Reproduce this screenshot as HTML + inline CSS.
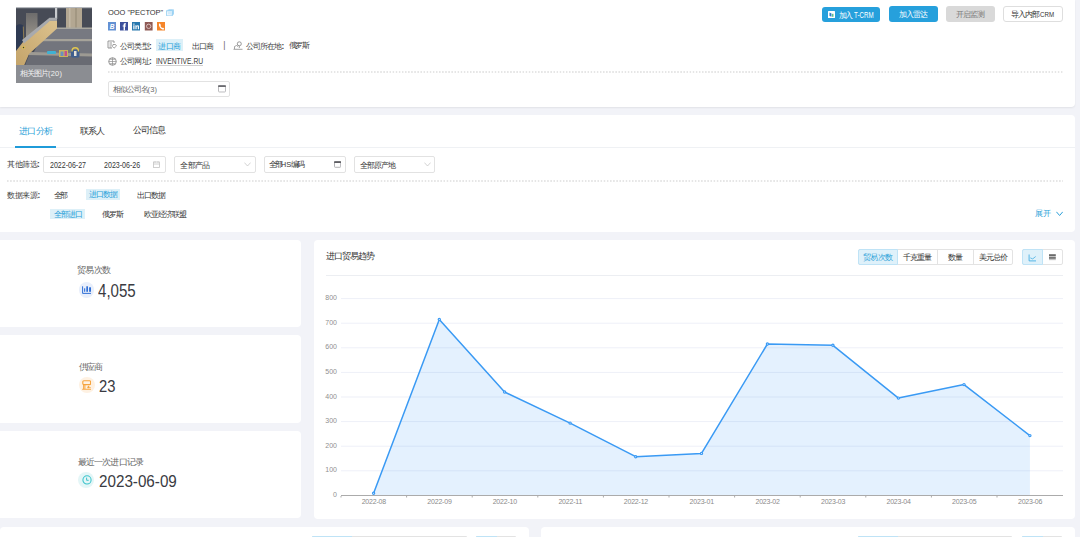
<!DOCTYPE html><html><head><meta charset="utf-8"><style>*{margin:0;padding:0;box-sizing:border-box}
html,body{width:1080px;height:537px;overflow:hidden;background:#f2f3f8;font-family:"Liberation Sans",sans-serif;color:#333;font-size:8px}
.abs{position:absolute}
.card{position:absolute;background:#fff;border-radius:4px}
.t{position:absolute;white-space:nowrap;line-height:1}
.box{position:absolute;border-radius:3px}
.inp{position:absolute;border:1px solid #e2e2e2;border-radius:2px;background:#fff}
</style></head><body>
<div class="abs" style="left:0;top:0;width:1080px;height:537px;">
<div class="card" style="left:0;top:0;width:1075px;height:107px;border-radius:0 0 4px 0;box-shadow:0 1px 2px rgba(0,0,0,0.07)"></div>
<div class="abs" style="left:16.2px;top:6.5px;width:76.3px;height:76px;overflow:hidden"><svg width="77" height="76" viewBox="0 0 77 76" style="display:block">
<defs><linearGradient id="pan" x1="0" y1="0" x2="0" y2="1"><stop offset="0" stop-color="#6d6c6c"/><stop offset="1" stop-color="#98938a"/></linearGradient>
<linearGradient id="wood" x1="0" y1="1" x2="1" y2="0"><stop offset="0" stop-color="#c4a46a"/><stop offset="1" stop-color="#dcc28e"/></linearGradient></defs>
<rect width="77" height="76" fill="#474b56"/>
<rect x="0" y="0" width="77" height="1.2" fill="#b5b8bd"/>
<rect x="10" y="6" width="11.5" height="24" fill="url(#pan)"/>
<rect x="39" y="1" width="2.2" height="11" fill="#c9cbce"/>
<rect x="50" y="1" width="16" height="20.5" fill="#b3a792"/>
<rect x="53" y="1" width="1.5" height="20.5" fill="#c4b9a5"/>
<rect x="59" y="1" width="2" height="20.5" fill="#a29782"/>
<polygon points="33,21 77,21 77,32 26,32" fill="#777981"/>
<rect x="33" y="20.5" width="44" height="1.5" fill="#a9a79f"/>
<polygon points="24,32.5 77,32.5 77,47 17,47" fill="#73757d"/>
<rect x="23" y="32" width="54" height="2.2" fill="#a6a39a"/>
<polygon points="14,46 77,47 77,58.5 9,58.5" fill="#696b73"/>
<polygon points="14,45 77,46.5 77,49.5 12,48" fill="#9d9a93"/>
<path d="M0 19C2 16.5 6.5 16.5 7.5 19.5L8.5 50L0 52Z" fill="#2e3a53"/>
<path d="M7.3 19.5L8.3 50" stroke="#b49754" stroke-width="0.7"/>
<polygon points="0,44 7,35 33.5,13.5 41,13.5 41,21.5 13,47 8,58.5 0,58.5" fill="url(#wood)"/>
<polygon points="6,33 33.5,10.8 41,10.8 41,13.8 34,13.8 8,36.5" fill="#a8aaae"/>
<circle cx="7.5" cy="40.5" r="1.8" fill="#d9bb55"/><circle cx="7.5" cy="40.5" r="0.7" fill="#3a3a3a"/>
<rect x="31" y="44" width="9" height="3" rx="1" fill="#3fb1d3"/>
<rect x="43" y="43" width="9" height="7" fill="#c9b55a"/>
<rect x="44.5" y="44.5" width="3" height="4.5" fill="#6a8fc0"/>
<rect x="48.5" y="44" width="2.5" height="5" fill="#c4508a"/>
<rect x="55" y="43" width="8.5" height="7.5" rx="1.5" fill="#3f5f8e"/>
<path d="M56 44.5C56 39.5 62.5 39.5 62.5 44.5" fill="none" stroke="#e3c84e" stroke-width="1.3"/>
<rect x="58" y="44" width="2.5" height="5" fill="#e5e2d8"/>
</svg><div class="abs" style="left:0;top:58px;width:77px;height:18px;background:#8b8d92"></div></div>
<svg class="abs" style="left:166px;top:8.9px" width="8" height="7.2" viewBox="0 0 8 7.2"><rect x="2.2" y="0.2" width="5.8" height="5.6" rx="0.8" fill="#a9d8f5"/><rect x="0.4" y="1.4" width="6.2" height="5.6" rx="0.8" fill="#d3ebfa" stroke="#8ccbf1" stroke-width="0.8"/><path d="M1.4 3V5.8H4.8" fill="none" stroke="#fff" stroke-width="0.6"/></svg>
<svg class="abs" style="left:108px;top:22px" width="58" height="9" viewBox="0 0 58 9">
<rect x="0" y="0" width="8" height="8.5" fill="#6391d3"/><text x="4" y="7" text-anchor="middle" font-family="Liberation Sans" font-weight="bold" font-style="italic" font-size="6.5" fill="#fff">B</text>
<rect x="12" y="0" width="8" height="8.5" fill="#3b4f9b"/><path d="M15.6 8.5V4.6H14.7V3.4H15.6V2.6C15.6 1.6 16.1 1.2 17 1.2H18V2.4H17.4C17.1 2.4 17 2.6 17 2.9V3.4H18L17.9 4.6H17V8.5Z" fill="#fff"/>
<rect x="24" y="0" width="8" height="8.5" fill="#2878ae"/><rect x="25.3" y="3.3" width="1.2" height="4" fill="#fff"/><rect x="25.3" y="1.6" width="1.2" height="1.1" fill="#fff"/><path d="M27.4 3.3H28.5V3.9C28.8 3.4 29.3 3.2 29.8 3.2C30.7 3.2 31 3.8 31 4.7V7.3H29.8V5C29.8 4.5 29.6 4.3 29.3 4.3C28.9 4.3 28.6 4.6 28.6 5.1V7.3H27.4Z" fill="#fff"/>
<rect x="36.8" y="0" width="7.8" height="8.5" fill="#8e5a55"/><circle cx="40.7" cy="4.3" r="2.2" fill="none" stroke="#e8d6d4" stroke-width="0.8"/>
<rect x="49" y="0" width="8" height="8.5" fill="#f5862b"/><path d="M51 1.8C51.4 1.3 52 1.4 52.3 2L52.8 3C53 3.4 52.8 3.7 52.5 3.9C52.9 4.9 53.5 5.6 54.4 6C54.6 5.7 55 5.5 55.3 5.8L56 6.4C56.4 6.8 56.2 7.3 55.8 7.5C53.5 8 50.5 5 51 1.8Z" fill="#fff"/>
</svg>
<svg class="abs" style="left:107px;top:40px" width="10" height="9" viewBox="0 0 10 9"><path d="M1 1H7V3M1 1V8H5M2.5 3H5M2.5 5H5M2.5 7H4.5" fill="none" stroke="#8c8c8c" stroke-width="0.9"/><path d="M6 4.5L8.5 4.5L9.5 6L7 8.2L5.5 6.5Z" fill="none" stroke="#8c8c8c" stroke-width="0.8"/></svg>
<svg class="abs" style="left:107.5px;top:56.5px" width="9" height="9" viewBox="0 0 9 9"><circle cx="4.5" cy="4.5" r="3.8" fill="none" stroke="#8c8c8c" stroke-width="0.9"/><path d="M0.8 4.5H8.2M4.5 0.7V8.3M2 2.3H7M2 6.7H7" fill="none" stroke="#8c8c8c" stroke-width="0.7"/></svg>
<svg class="abs" style="left:233px;top:40.5px" width="10" height="9" viewBox="0 0 10 9"><circle cx="6.3" cy="2.8" r="2" fill="none" stroke="#8c8c8c" stroke-width="0.9"/><path d="M6.3 4.8V7M0.5 8.3H9.5M1.5 8V5.5L3.5 4.5L5 5.5" fill="none" stroke="#8c8c8c" stroke-width="0.8"/></svg>
<div class="abs" style="left:155.5px;top:39px;width:27.5px;height:12px;background:#ddf0f8"></div>
<div class="abs" style="left:156px;top:65px;width:47px;height:1px;background:#d0d0d0"></div>
<div class="abs" style="left:108px;top:71px;width:955px;height:2px;background-image:linear-gradient(90deg,#e6e6e6 60%,transparent 60%);background-size:3.1px 2px"></div>
<div class="inp" style="left:108.4px;top:81.2px;width:121.3px;height:15.6px"></div>
<svg class="abs" style="left:218px;top:85.4px" width="8" height="7.4" viewBox="0 0 8 7.4"><rect x="0.5" y="0.5" width="7" height="6.5" rx="0.8" fill="none" stroke="#b4b4b8" stroke-width="0.9"/><rect x="0.1" y="0.3" width="7.8" height="1.7" rx="0.5" fill="#6b6b70"/></svg>
<div class="box" style="left:821.6px;top:7px;width:58.4px;height:14.7px;background:#26a0dc"></div>
<svg class="abs" style="left:828px;top:11.4px" width="7" height="7" viewBox="0 0 7 7"><rect width="7" height="7" rx="0.5" fill="#fff"/><path d="M1.5 1.5L3.5 2.5V5.8L1.5 5Z" fill="#2a7fc9"/><rect x="4.2" y="2.8" width="1.2" height="3" fill="#39b36b"/></svg>
<div class="box" style="left:888.6px;top:6.3px;width:49px;height:16px;background:#26a0dc"></div>
<div class="box" style="left:946px;top:6.3px;width:49px;height:16px;background:#d9d9d9"></div>
<div class="box" style="left:1003px;top:6.3px;width:59.7px;height:16px;background:#fff;border:1px solid #dedede"></div>
<div class="card" style="left:0;top:115px;width:1075px;height:116.6px;border-radius:0 4px 4px 0"></div>
<div class="abs" style="left:0;top:147px;width:1075px;height:1px;background:#eff1f4"></div>
<div class="abs" style="left:14.5px;top:146px;width:41.3px;height:2px;background:#1f9bd9"></div>
<div class="inp" style="left:43.3px;top:156.3px;width:122.7px;height:16.3px"></div>
<svg class="abs" style="left:152.5px;top:161.4px" width="7" height="7" viewBox="0 0 7 7"><rect x="0.5" y="1" width="6" height="5.5" fill="none" stroke="#c4c4c4" stroke-width="0.8"/><path d="M0.5 3H6.5M2 0.2V1.8M5 0.2V1.8" stroke="#c4c4c4" stroke-width="0.8"/></svg>
<div class="inp" style="left:174px;top:156.3px;width:81.6px;height:16.3px"></div>
<svg class="abs" style="left:243.5px;top:162px" width="7" height="5" viewBox="0 0 7 5"><path d="M0.4 0.6L3.5 4L6.6 0.6" fill="none" stroke="#c8c8c8" stroke-width="0.8"/></svg>
<div class="inp" style="left:264.3px;top:156.3px;width:81.5px;height:16.3px"></div>
<svg class="abs" style="left:333.6px;top:161px" width="7.2" height="6.8" viewBox="0 0 7.2 6.8"><rect x="0.5" y="0.5" width="6.2" height="5.8" rx="0.7" fill="none" stroke="#a8a8ac" stroke-width="0.9"/><rect x="0.1" y="0.3" width="7" height="1.6" rx="0.5" fill="#5f5f64"/></svg>
<div class="inp" style="left:354.3px;top:156.3px;width:81.2px;height:16.3px"></div>
<svg class="abs" style="left:423.5px;top:162px" width="7" height="5" viewBox="0 0 7 5"><path d="M0.4 0.6L3.5 4L6.6 0.6" fill="none" stroke="#c8c8c8" stroke-width="0.8"/></svg>
<div class="abs" style="left:7px;top:180px;width:1056px;height:1.5px;background-image:linear-gradient(90deg,#e6e6e6 60%,transparent 60%);background-size:3.15px 1.5px"></div>
<div class="abs" style="left:85.6px;top:189.2px;width:34.2px;height:10.5px;background:#ddf0f8"></div>
<div class="abs" style="left:50.4px;top:208.6px;width:34.8px;height:10.2px;background:#ddf0f8"></div>
<svg class="abs" style="left:1055.7px;top:211px" width="7.2" height="5.5" viewBox="0 0 7.2 5.5"><path d="M0.4 0.8L3.6 4.5L6.8 0.8" fill="none" stroke="#2a9fd8" stroke-width="1"/></svg>
<div class="card" style="left:0;top:240px;width:301.4px;height:87px;border-radius:0 4px 4px 0"></div>
<div class="card" style="left:0;top:335.3px;width:301.4px;height:87.6px;border-radius:0 4px 4px 0"></div>
<div class="card" style="left:0;top:430.6px;width:301.4px;height:87.4px;border-radius:0 4px 4px 0"></div>
<div class="abs" style="left:78.6px;top:282px;width:15.6px;height:15.6px;border-radius:50%;background:#e9effb"></div>
<svg class="abs" style="left:81.9px;top:285.7px" width="9.3" height="8.2" viewBox="0 0 9.3 8.2"><path d="M0.6 0.3V7.4H9" fill="none" stroke="#2f6fd6" stroke-width="1"/><rect x="2.1" y="2.3" width="1.1" height="3.5" fill="#2f6fd6"/><rect x="4.3" y="0.3" width="1.7" height="5.5" fill="#2f6fd6"/><rect x="7.1" y="1.3" width="1.9" height="4.5" fill="#2f6fd6"/></svg>
<div class="abs" style="left:78.6px;top:377px;width:16px;height:16px;border-radius:50%;background:#fef1e2"></div>
<svg class="abs" style="left:81.9px;top:380px" width="9.4" height="10" viewBox="0 0 9.4 10"><rect x="0.8" y="0.7" width="7.8" height="3.9" rx="1" fill="none" stroke="#f6a33c" stroke-width="1.1"/><path d="M1.6 4.6V9M2.9 4.6V9M0.2 9.3H9.2" fill="none" stroke="#f6a33c" stroke-width="0.95"/><path d="M6.5 5.4C6.9 6 7.7 6.8 7.7 7.4C7.7 8 7.2 8.3 6.5 8.3C5.8 8.3 5.3 8 5.3 7.4C5.3 6.8 6.1 6 6.5 5.4Z" fill="#f6a33c"/><path d="M7.7 7.6H9" stroke="#f6a33c" stroke-width="0.6"/></svg>
<div class="abs" style="left:78.4px;top:471.9px;width:16px;height:16px;border-radius:50%;background:#e4f6f7"></div>
<svg class="abs" style="left:81.6px;top:475.2px" width="10" height="10" viewBox="0 0 10 10"><circle cx="5" cy="4.9" r="4.1" fill="none" stroke="#3cc4cc" stroke-width="1.05"/><path d="M4.6 2.6V5.3H6.7" fill="none" stroke="#3cc4cc" stroke-width="1"/></svg>
<div class="card" style="left:313.8px;top:240px;width:761.3px;height:278.5px"></div>
<div class="abs" style="left:858.1px;top:249.1px;width:155.4px;height:15.9px;border:1px solid #e3e3e3;border-radius:2px;background:#fff"></div>
<div class="abs" style="left:858.1px;top:249.1px;width:39.8px;height:15.9px;border:1px solid #bfe3f6;border-radius:2px 0 0 2px;background:#dff1fa"></div>
<div class="abs" style="left:936.6px;top:249.1px;width:1px;height:15.9px;background:#e3e3e3"></div>
<div class="abs" style="left:973.2px;top:249.1px;width:1px;height:15.9px;background:#e3e3e3"></div>
<div class="abs" style="left:1022px;top:249.1px;width:40.8px;height:15.9px;border:1px solid #e3e3e3;border-radius:2px;background:#fff"></div>
<div class="abs" style="left:1022px;top:249.1px;width:20.5px;height:15.9px;border:1px solid #bfe3f6;border-radius:2px 0 0 2px;background:#dff1fa"></div>
<svg class="abs" style="left:1028px;top:253.5px" width="9" height="8" viewBox="0 0 9 8"><path d="M1.1 0.5V6.9H8" fill="none" stroke="#45aee3" stroke-width="0.9"/><path d="M2.3 3.9L4.7 4.9L7.7 2.5" fill="none" stroke="#45aee3" stroke-width="0.8"/></svg>
<svg class="abs" style="left:1048.9px;top:254px" width="7" height="7" viewBox="0 0 7 7"><rect x="0" y="0.2" width="6.8" height="2.2" fill="#6a6a6a"/><rect x="0" y="3.2" width="6.8" height="1.5" fill="#555"/><rect x="0" y="5.4" width="6.8" height="0.7" fill="#9a9a9a"/></svg>
<svg class="abs" style="left:0;top:0" width="1080" height="537" viewBox="0 0 1080 537">
<rect x="326" y="275" width="737" height="1" fill="#eceef2"/>
<rect x="341" y="298.1" width="722" height="1" fill="#eef0f8"/>
<rect x="341" y="322.7" width="722" height="1" fill="#eef0f8"/>
<rect x="341" y="347.3" width="722" height="1" fill="#eef0f8"/>
<rect x="341" y="371.9" width="722" height="1" fill="#eef0f8"/>
<rect x="341" y="396.5" width="722" height="1" fill="#eef0f8"/>
<rect x="341" y="421.1" width="722" height="1" fill="#eef0f8"/>
<rect x="341" y="445.7" width="722" height="1" fill="#eef0f8"/>
<rect x="341" y="470.3" width="722" height="1" fill="#eef0f8"/>
<text x="337" y="300.2" text-anchor="end" font-family="Liberation Sans" font-size="7" fill="#8f8f8f">800</text>
<text x="337" y="324.8" text-anchor="end" font-family="Liberation Sans" font-size="7" fill="#8f8f8f">700</text>
<text x="337" y="349.4" text-anchor="end" font-family="Liberation Sans" font-size="7" fill="#8f8f8f">600</text>
<text x="337" y="374.0" text-anchor="end" font-family="Liberation Sans" font-size="7" fill="#8f8f8f">500</text>
<text x="337" y="398.6" text-anchor="end" font-family="Liberation Sans" font-size="7" fill="#8f8f8f">400</text>
<text x="337" y="423.2" text-anchor="end" font-family="Liberation Sans" font-size="7" fill="#8f8f8f">300</text>
<text x="337" y="447.8" text-anchor="end" font-family="Liberation Sans" font-size="7" fill="#8f8f8f">200</text>
<text x="337" y="472.4" text-anchor="end" font-family="Liberation Sans" font-size="7" fill="#8f8f8f">100</text>
<text x="337" y="496.6" text-anchor="end" font-family="Liberation Sans" font-size="7" fill="#8f8f8f">0</text>
<path d="M373.6,493.3 L439.3,319.4 L504.6,392 L570.1,423.1 L635.7,456.7 L701.5,453.4 L767.4,344 L832.9,345.3 L898.4,398.1 L964,384.6 L1029.9,435.6 L1029.9,495.0 L373.6,495.0 Z" fill="rgba(20,130,250,0.115)"/>
<rect x="341" y="495" width="722" height="1" fill="#ababab"/>
<rect x="340.5" y="496" width="1" height="1.5" fill="#ababab"/>
<rect x="406.1" y="496" width="1" height="1.5" fill="#ababab"/>
<rect x="471.7" y="496" width="1" height="1.5" fill="#ababab"/>
<rect x="537.3" y="496" width="1" height="1.5" fill="#ababab"/>
<rect x="602.9" y="496" width="1" height="1.5" fill="#ababab"/>
<rect x="668.5" y="496" width="1" height="1.5" fill="#ababab"/>
<rect x="734.1" y="496" width="1" height="1.5" fill="#ababab"/>
<rect x="799.7" y="496" width="1" height="1.5" fill="#ababab"/>
<rect x="865.3" y="496" width="1" height="1.5" fill="#ababab"/>
<rect x="930.9" y="496" width="1" height="1.5" fill="#ababab"/>
<rect x="996.5" y="496" width="1" height="1.5" fill="#ababab"/>
<text x="373.8" y="503.9" text-anchor="middle" font-family="Liberation Sans" font-size="7" letter-spacing="-0.2" fill="#8a8a8a">2022-08</text>
<text x="439.5" y="503.9" text-anchor="middle" font-family="Liberation Sans" font-size="7" letter-spacing="-0.2" fill="#8a8a8a">2022-09</text>
<text x="504.8" y="503.9" text-anchor="middle" font-family="Liberation Sans" font-size="7" letter-spacing="-0.2" fill="#8a8a8a">2022-10</text>
<text x="570.3000000000001" y="503.9" text-anchor="middle" font-family="Liberation Sans" font-size="7" letter-spacing="-0.2" fill="#8a8a8a">2022-11</text>
<text x="635.9000000000001" y="503.9" text-anchor="middle" font-family="Liberation Sans" font-size="7" letter-spacing="-0.2" fill="#8a8a8a">2022-12</text>
<text x="701.7" y="503.9" text-anchor="middle" font-family="Liberation Sans" font-size="7" letter-spacing="-0.2" fill="#8a8a8a">2023-01</text>
<text x="767.6" y="503.9" text-anchor="middle" font-family="Liberation Sans" font-size="7" letter-spacing="-0.2" fill="#8a8a8a">2023-02</text>
<text x="833.1" y="503.9" text-anchor="middle" font-family="Liberation Sans" font-size="7" letter-spacing="-0.2" fill="#8a8a8a">2023-03</text>
<text x="898.6" y="503.9" text-anchor="middle" font-family="Liberation Sans" font-size="7" letter-spacing="-0.2" fill="#8a8a8a">2023-04</text>
<text x="964.2" y="503.9" text-anchor="middle" font-family="Liberation Sans" font-size="7" letter-spacing="-0.2" fill="#8a8a8a">2023-05</text>
<text x="1030.1000000000001" y="503.9" text-anchor="middle" font-family="Liberation Sans" font-size="7" letter-spacing="-0.2" fill="#8a8a8a">2023-06</text>
<path d="M373.6,493.3 L439.3,319.4 L504.6,392 L570.1,423.1 L635.7,456.7 L701.5,453.4 L767.4,344 L832.9,345.3 L898.4,398.1 L964,384.6 L1029.9,435.6" fill="none" stroke="#3a9af4" stroke-width="1.5" stroke-linejoin="round"/>
<circle cx="373.6" cy="493.3" r="1.1" fill="#fff" stroke="#3a9af4" stroke-width="1.2"/>
<circle cx="439.3" cy="319.4" r="1.1" fill="#fff" stroke="#3a9af4" stroke-width="1.2"/>
<circle cx="504.6" cy="392" r="1.1" fill="#fff" stroke="#3a9af4" stroke-width="1.2"/>
<circle cx="570.1" cy="423.1" r="1.1" fill="#fff" stroke="#3a9af4" stroke-width="1.2"/>
<circle cx="635.7" cy="456.7" r="1.1" fill="#fff" stroke="#3a9af4" stroke-width="1.2"/>
<circle cx="701.5" cy="453.4" r="1.1" fill="#fff" stroke="#3a9af4" stroke-width="1.2"/>
<circle cx="767.4" cy="344" r="1.1" fill="#fff" stroke="#3a9af4" stroke-width="1.2"/>
<circle cx="832.9" cy="345.3" r="1.1" fill="#fff" stroke="#3a9af4" stroke-width="1.2"/>
<circle cx="898.4" cy="398.1" r="1.1" fill="#fff" stroke="#3a9af4" stroke-width="1.2"/>
<circle cx="964" cy="384.6" r="1.1" fill="#fff" stroke="#3a9af4" stroke-width="1.2"/>
<circle cx="1029.9" cy="435.6" r="1.1" fill="#fff" stroke="#3a9af4" stroke-width="1.2"/>
</svg>
<div class="card" style="left:0;top:526.8px;width:528.7px;height:40px"></div>
<div class="card" style="left:541.2px;top:527.4px;width:533.5px;height:40px"></div>
<div class="abs" style="left:312px;top:535.8px;width:154.8px;height:1.2px;background:#e3e3e3;border-radius:2px 2px 0 0"></div>
<div class="abs" style="left:312px;top:535.8px;width:40px;height:1.2px;background:#bfe3f6;border-radius:2px 0 0 0"></div>
<div class="abs" style="left:476.3px;top:535.8px;width:39.49999999999994px;height:1.2px;background:#e3e3e3;border-radius:2px 2px 0 0"></div>
<div class="abs" style="left:476.3px;top:535.8px;width:20.5px;height:1.2px;background:#bfe3f6;border-radius:2px 0 0 0"></div>
<div class="abs" style="left:858.3px;top:535.8px;width:154.20000000000005px;height:1.2px;background:#e3e3e3;border-radius:2px 2px 0 0"></div>
<div class="abs" style="left:858.3px;top:535.8px;width:40.0px;height:1.2px;background:#bfe3f6;border-radius:2px 0 0 0"></div>
<div class="abs" style="left:1022px;top:535.8px;width:40px;height:1.2px;background:#e3e3e3;border-radius:2px 2px 0 0"></div>
<div class="abs" style="left:1022px;top:535.8px;width:21.299999999999955px;height:1.2px;background:#bfe3f6;border-radius:2px 0 0 0"></div>
</div>
<div class="t" id="title" style="left:108.00px;top:9.01px;font-size:7.99px;color:#333;letter-spacing:0.000px;font-weight:normal;transform:scaleX(0.9329);transform-origin:0 50%;">OOO "PECTOP"</div>
<div class="t" id="imgcaph" style="left:20.00px;top:70.00px;font-size:7.50px;color:#f0f0f0;letter-spacing:-1.000px;font-weight:normal;">相关图片<span style="letter-spacing:0.2px">(20)</span></div>
<div class="t" id="ctype" style="left:119.90px;top:42.75px;font-size:7.50px;color:#3e3e3e;letter-spacing:-0.700px;font-weight:normal;">公司类型<span style="font-weight:bold;font-size:1.1em;line-height:0">:</span></div>
<div class="t" id="imp" style="left:158.40px;top:42.75px;font-size:7.50px;color:#2a9fd8;letter-spacing:-0.500px;font-weight:normal;">进口商</div>
<div class="t" id="exp" style="left:191.70px;top:42.75px;font-size:7.50px;color:#3e3e3e;letter-spacing:-1.000px;font-weight:normal;">出口商</div>
<div class="t" id="bar" style="left:223.30px;top:40.55px;font-size:8.50px;color:#666;letter-spacing:0.000px;font-weight:normal;">|</div>
<div class="t" id="loc" style="left:246.10px;top:42.75px;font-size:7.50px;color:#3e3e3e;letter-spacing:-0.945px;font-weight:normal;">公司所在地<span style="font-weight:bold;font-size:1.1em;line-height:0">:</span></div>
<div class="t" id="loc2" style="left:288.60px;top:42.25px;font-size:7.50px;color:#3e3e3e;letter-spacing:-1.400px;font-weight:normal;">俄罗斯</div>
<div class="t" id="web" style="left:119.90px;top:58.25px;font-size:7.50px;color:#3e3e3e;letter-spacing:-0.700px;font-weight:normal;">公司网址<span style="font-weight:bold;font-size:1.1em;line-height:0">:</span></div>
<div class="t" id="webv" style="left:155.70px;top:56.76px;font-size:8.68px;color:#3e3e3e;letter-spacing:0.000px;font-weight:normal;transform:scaleX(0.7761);transform-origin:0 50%;">INVENTIVE.RU</div>
<div class="t" id="simh" style="left:112.50px;top:86.25px;font-size:7.50px;color:#6a6a6a;letter-spacing:-1.000px;font-weight:normal;">相似公司名<span style="letter-spacing:0.2px">(3)</span></div>
<div class="t" id="b1" style="left:839.20px;top:11.75px;font-size:7.50px;color:#fff;letter-spacing:-2.333px;font-weight:normal;">加入</div>
<div class="t" id="b1b" style="left:854.20px;top:10.90px;font-size:8.40px;color:#fff;letter-spacing:0.000px;font-weight:normal;transform:scaleX(0.7366);transform-origin:0 50%;">T-CRM</div>
<div class="t" id="b2" style="left:898.80px;top:11.35px;font-size:7.50px;color:#fff;letter-spacing:-1.067px;font-weight:normal;">加入雷达</div>
<div class="t" id="b3" style="left:955.80px;top:11.35px;font-size:7.50px;color:#7a7a7a;letter-spacing:-1.067px;font-weight:normal;">开启监测</div>
<div class="t" id="b4" style="left:1011.20px;top:11.15px;font-size:7.50px;color:#333;letter-spacing:-1.017px;font-weight:normal;">导入内部</div>
<div class="t" id="b4b" style="left:1040.40px;top:10.98px;font-size:8.05px;color:#333;letter-spacing:0.000px;font-weight:normal;transform:scaleX(0.7683);transform-origin:0 50%;">CRM</div>
<div class="t" id="tab1" style="left:19.00px;top:127.15px;font-size:8.50px;color:#2a9fd8;letter-spacing:-0.667px;font-weight:normal;">进口分析</div>
<div class="t" id="tab2" style="left:80.00px;top:127.15px;font-size:8.50px;color:#333;letter-spacing:-1.000px;font-weight:normal;">联系人</div>
<div class="t" id="tab3" style="left:133.20px;top:126.15px;font-size:8.50px;color:#333;letter-spacing:-0.933px;font-weight:normal;">公司信息</div>
<div class="t" id="f0" style="left:7.40px;top:161.45px;font-size:7.50px;color:#3e3e3e;letter-spacing:-0.600px;font-weight:normal;">其他筛选<span style="font-weight:bold;font-size:1.1em;line-height:0">:</span></div>
<div class="t" id="d1" style="left:50.00px;top:160.90px;font-size:8.81px;color:#363636;letter-spacing:0.000px;font-weight:normal;transform:scaleX(0.8008);transform-origin:0 50%;">2022-06-27</div>
<div class="t" id="d2" style="left:104.30px;top:160.90px;font-size:8.81px;color:#363636;letter-spacing:0.000px;font-weight:normal;transform:scaleX(0.8055);transform-origin:0 50%;">2023-06-26</div>
<div class="t" id="p1" style="left:180.40px;top:161.75px;font-size:7.50px;color:#363636;letter-spacing:-0.800px;font-weight:normal;">全部产品</div>
<div class="t" id="p2h" style="left:268.50px;top:161.25px;font-size:7.50px;color:#363636;letter-spacing:-1.933px;font-weight:normal;">全部<span style="letter-spacing:0.1px">HS</span>编码</div>
<div class="t" id="p3" style="left:360.00px;top:161.75px;font-size:7.50px;color:#363636;letter-spacing:-1.100px;font-weight:normal;">全部原产地</div>
<div class="t" id="ds" style="left:7.40px;top:192.05px;font-size:7.50px;color:#3e3e3e;letter-spacing:-0.500px;font-weight:normal;">数据来源<span style="font-weight:bold;font-size:1.1em;line-height:0">:</span></div>
<div class="t" id="all" style="left:54.10px;top:192.05px;font-size:7.50px;color:#363636;letter-spacing:-2.200px;font-weight:normal;">全部</div>
<div class="t" id="impd" style="left:88.50px;top:191.05px;font-size:7.50px;color:#2a9fd8;letter-spacing:-1.000px;font-weight:normal;">进口数据</div>
<div class="t" id="expd" style="left:137.20px;top:192.05px;font-size:7.50px;color:#363636;letter-spacing:-0.933px;font-weight:normal;">出口数据</div>
<div class="t" id="alli" style="left:54.10px;top:210.65px;font-size:7.50px;color:#2a9fd8;letter-spacing:-1.133px;font-weight:normal;">全部进口</div>
<div class="t" id="ru" style="left:102.40px;top:210.65px;font-size:7.50px;color:#363636;letter-spacing:-1.100px;font-weight:normal;">俄罗斯</div>
<div class="t" id="eaeu" style="left:144.20px;top:210.65px;font-size:7.50px;color:#363636;letter-spacing:-0.960px;font-weight:normal;">欧亚经济联盟</div>
<div class="t" id="more" style="left:1034.90px;top:210.45px;font-size:7.50px;color:#2a9fd8;letter-spacing:0.000px;font-weight:normal;">展开</div>
<div class="t" id="s1l" style="left:77.00px;top:265.95px;font-size:8.50px;color:#666;letter-spacing:-0.667px;font-weight:normal;">贸易次数</div>
<div class="t" id="s1v" style="left:98.40px;top:282.54px;font-size:17.92px;color:#3a3b42;letter-spacing:0.000px;font-weight:normal;transform:scaleX(0.8414);transform-origin:0 50%;">4,055</div>
<div class="t" id="s2l" style="left:78.60px;top:362.75px;font-size:8.50px;color:#666;letter-spacing:-1.400px;font-weight:normal;">供应商</div>
<div class="t" id="s2v" style="left:99.00px;top:378.66px;font-size:15.68px;color:#3a3b42;letter-spacing:0.000px;font-weight:normal;transform:scaleX(0.9436);transform-origin:0 50%;">23</div>
<div class="t" id="s3l" style="left:77.90px;top:457.75px;font-size:8.50px;color:#666;letter-spacing:-0.857px;font-weight:normal;">最近一次进口记录</div>
<div class="t" id="s3v" style="left:99.30px;top:472.67px;font-size:16.06px;color:#3a3b42;letter-spacing:0.000px;font-weight:normal;transform:scaleX(0.9480);transform-origin:0 50%;">2023-06-09</div>
<div class="t" id="ctitle" style="left:326.20px;top:251.75px;font-size:8.50px;color:#333;letter-spacing:-1.080px;font-weight:normal;">进口贸易趋势</div>
<div class="t" id="g1" style="left:863.40px;top:253.85px;font-size:7.50px;color:#2a9fd8;letter-spacing:-0.933px;font-weight:normal;">贸易次数</div>
<div class="t" id="g2" style="left:903.20px;top:253.85px;font-size:7.50px;color:#333;letter-spacing:-1.000px;font-weight:normal;">千克重量</div>
<div class="t" id="g3" style="left:948.20px;top:253.85px;font-size:7.50px;color:#333;letter-spacing:-0.800px;font-weight:normal;">数量</div>
<div class="t" id="g4" style="left:978.70px;top:253.85px;font-size:7.50px;color:#333;letter-spacing:-1.000px;font-weight:normal;">美元总价</div>
</body></html>
